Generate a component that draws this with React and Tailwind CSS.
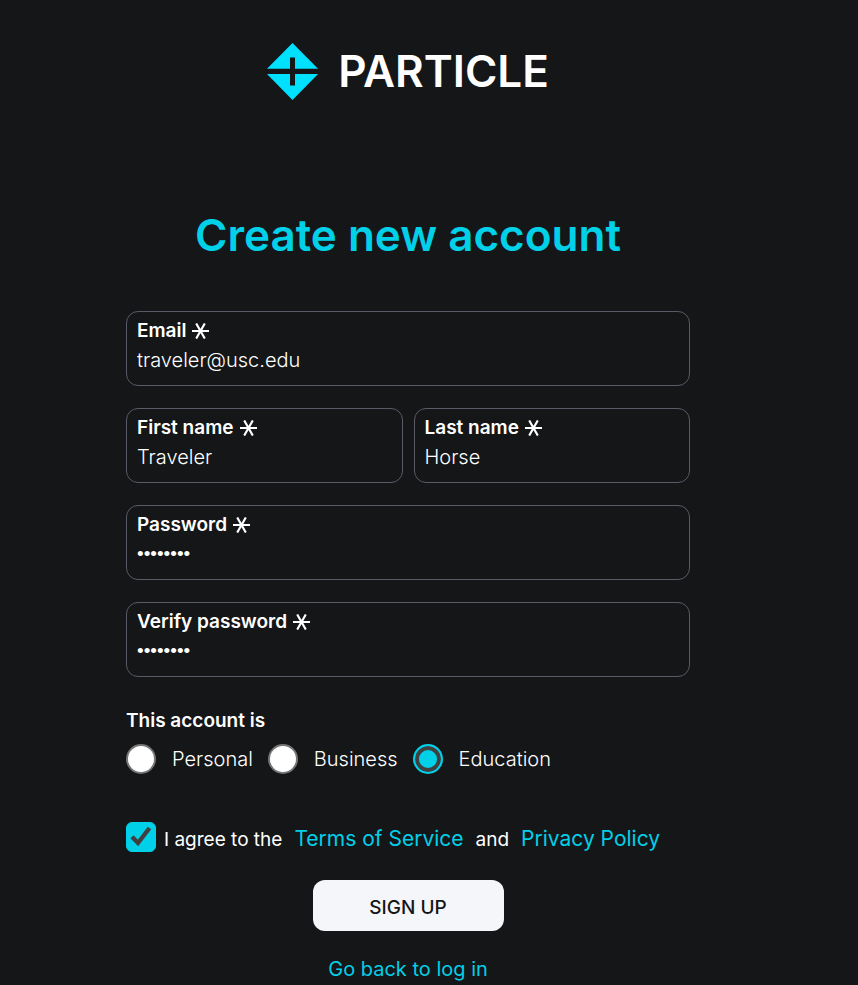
import { useState } from "react";

function Asterisk() {
  return (
    <svg aria-hidden="true" viewBox="0 0 17 16" className="h-4 w-[17px]" fill="none" stroke="currentColor" strokeWidth="2.1">
      <path d="M0 8H17M4.2 0.4L12.8 15.6M12.8 0.4L4.2 15.6" />
    </svg>
  );
}

function Field({ id, label, type = "text", value }) {
  return (
    <div className="flex h-[75px] w-full min-w-0 flex-col rounded-xl border border-[#5a5a66] px-2.5 pt-2">
      <label htmlFor={id} className="flex items-center gap-1.5 text-[19px] leading-[22px] font-semibold">
        {label}
        <Asterisk />
      </label>
      <input
        id={id}
        type={type}
        defaultValue={value}
        required
        className={
          type === "password"
            ? "h-9 w-full bg-transparent font-['Liberation_Sans',sans-serif] text-[19px] outline-none"
            : "h-9 w-full bg-transparent text-[20px] font-light outline-none"
        }
      />
    </div>
  );
}

function AccountType({ value, checked, onChange }) {
  return (
    <label className="flex items-center gap-4 text-[20px] leading-7 font-light">
      <input
        type="radio"
        name="account-type"
        value={value}
        checked={checked}
        onChange={onChange}
        className="size-[30px] shrink-0 appearance-none rounded-full border-2 border-[#767676] bg-white checked:border-[#00d0e8] checked:bg-[#00d0e8] checked:shadow-[inset_0_0_0_4px_#404040]"
      />
      {value}
    </label>
  );
}

function Logo() {
  return (
    <div className="flex items-center gap-5">
      <svg aria-hidden="true" viewBox="0 0 51 57" className="h-[57px] w-[51px]" fill="#00e1ff">
        <path d="M25.5 0L51 25.8H28V14.5H23V25.8H0Z" />
        <path d="M0 31H23V42.5H28V31H51L25.5 57Z" />
      </svg>
      <span className="text-[44px] leading-[57px] font-semibold">PARTICLE</span>
    </div>
  );
}

export default function App() {
  const [type, setType] = useState("Education");
  return (
    <main className="min-h-screen bg-[#141618] pt-[43px] pr-[42px] font-['Inter',sans-serif] text-white">
      <div className="mx-auto flex max-w-[564px] flex-col items-center">
        <Logo />
        <h1 className="mt-[107px] text-[44px] leading-[56px] font-semibold text-[#00d0e8]">Create new account</h1>
        <form className="mt-12 flex w-full flex-col" onSubmit={(e) => e.preventDefault()}>
          <div className="flex flex-col gap-[22px]">
            <Field id="email" label="Email" value="traveler@usc.edu" />
            <div className="flex gap-[11px]">
              <Field id="first-name" label="First name" value="Traveler" />
              <Field id="last-name" label="Last name" value="Horse" />
            </div>
            <Field id="password" label="Password" type="password" value="password" />
            <Field id="verify-password" label="Verify password" type="password" value="password" />
          </div>
          <fieldset className="mt-[33px]">
            <legend className="text-[19px] leading-[22px] font-semibold">This account is</legend>
            <div className="mt-3 flex gap-[15px]">
              {["Personal", "Business", "Education"].map((t) => (
                <AccountType key={t} value={t} checked={type === t} onChange={() => setType(t)} />
              ))}
            </div>
          </fieldset>
          <div className="mt-[45px] flex items-center gap-2">
            <span className="grid size-[30px] shrink-0">
              <input
                id="agree"
                type="checkbox"
                defaultChecked
                className="peer col-start-1 row-start-1 size-[30px] appearance-none rounded-md border border-[#767676] bg-white checked:border-[#00d0e8] checked:bg-[#00d0e8]"
              />
              <svg
                aria-hidden="true"
                viewBox="0 0 30 30"
                className="pointer-events-none invisible col-start-1 row-start-1 size-[30px] peer-checked:visible"
                fill="none"
                stroke="#404040"
                strokeWidth="4.4"
              >
                <path d="M6 14.8L12 21L23.5 6" />
              </svg>
            </span>
            <p className="flex items-baseline gap-3 pt-1.5 text-[19px] leading-7">
              <label htmlFor="agree">I agree to the</label>
              <a href="#terms" className="text-[21px] text-[#00d0e8]">Terms of Service</a>
              <span>and</span>
              <a href="#privacy" className="text-[21px] text-[#00d0e8]">Privacy Policy</a>
            </p>
          </div>
          <button type="submit" className="mt-[26px] h-[51px] w-[191px] self-center rounded-xl bg-[#f5f6fa] pt-1.5 text-[19px] font-medium text-[#141618]">
            SIGN UP
          </button>
        </form>
        <a href="#login" className="mt-6 text-[20px] leading-7 text-[#00d0e8]">Go back to log in</a>
      </div>
    </main>
  );
}
